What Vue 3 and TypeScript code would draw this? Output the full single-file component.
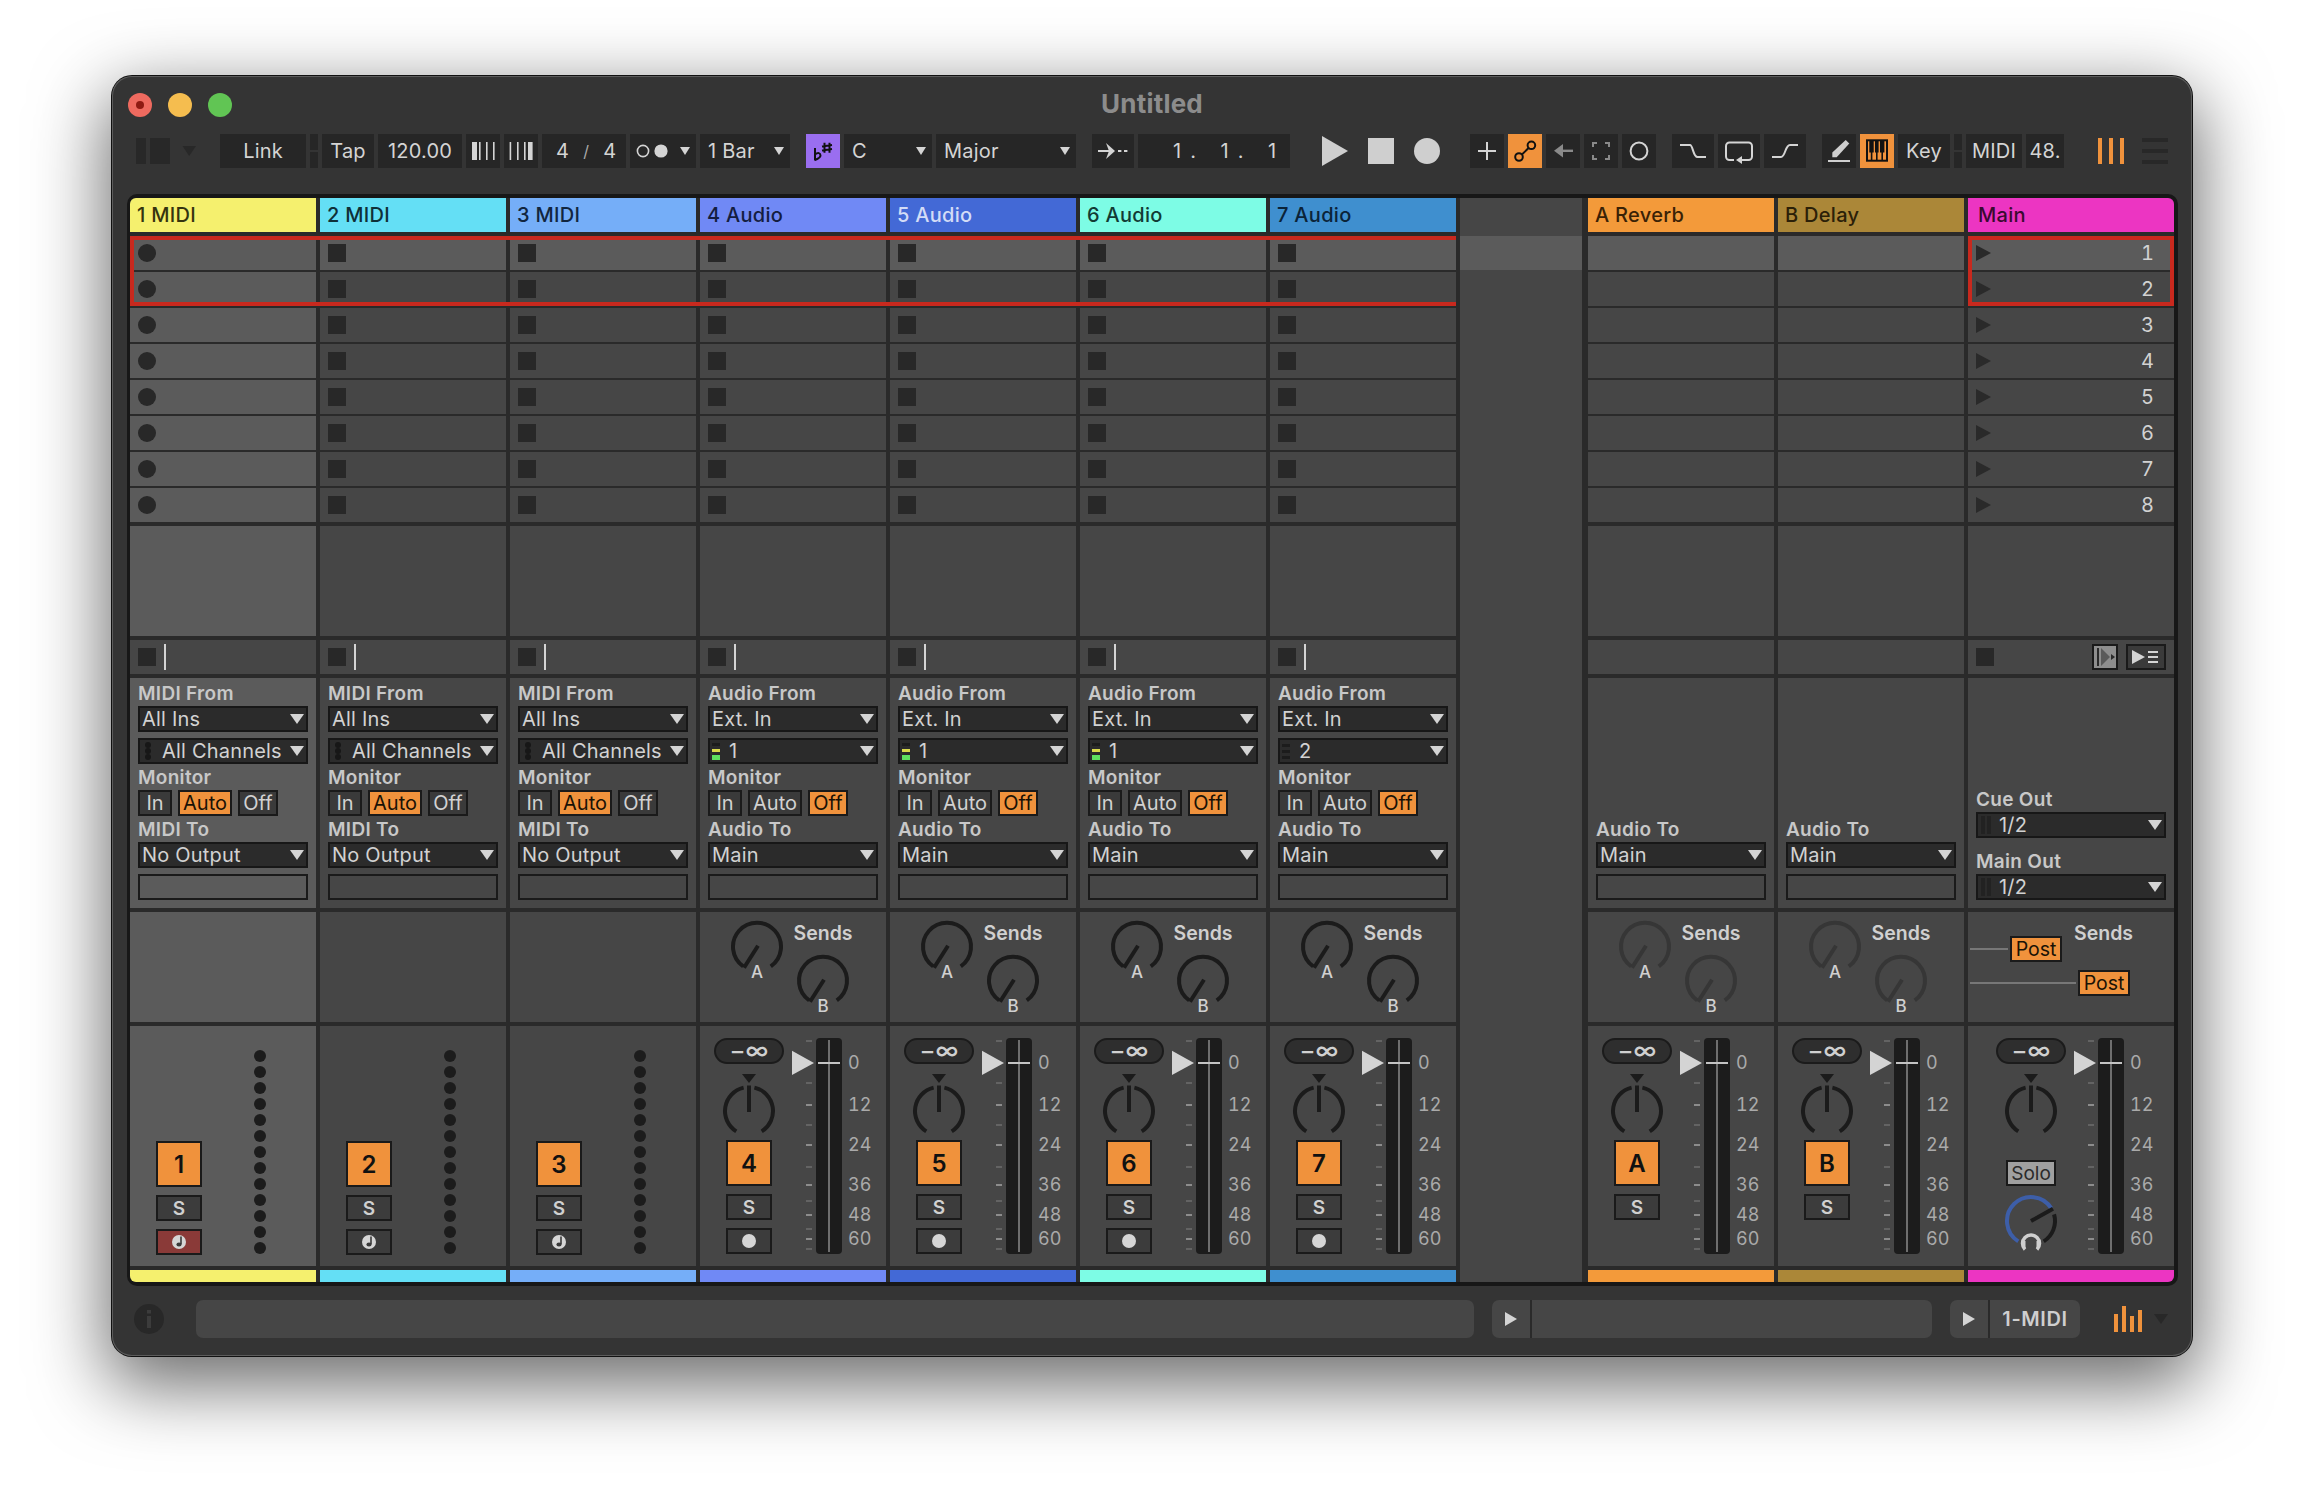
<script setup lang="ts">
type Kind = 'midi' | 'audio' | 'return' | 'main'
interface Track {
  id: string
  name: string
  kind: Kind
  color: string
  ink: string
  input?: string
  selected?: boolean
}

const tracks: Track[] = [
  { id: '1', name: '1 MIDI', kind: 'midi', color: '#f5f06e', ink: '#35340f', selected: true },
  { id: '2', name: '2 MIDI', kind: 'midi', color: '#64dff5', ink: '#0f3038' },
  { id: '3', name: '3 MIDI', kind: 'midi', color: '#75aef8', ink: '#12263f' },
  { id: '4', name: '4 Audio', kind: 'audio', color: '#7089f5', ink: '#141d40', input: '1' },
  { id: '5', name: '5 Audio', kind: 'audio', color: '#4369d6', ink: '#d3dcf6', input: '1' },
  { id: '6', name: '6 Audio', kind: 'audio', color: '#7dfce5', ink: '#123a34', input: '1' },
  { id: '7', name: '7 Audio', kind: 'audio', color: '#3f8fcf', ink: '#0b2338', input: '2' },
]
const returns: Track[] = [
  { id: 'A', name: 'A Reverb', kind: 'return', color: '#f39a3a', ink: '#3a2206' },
  { id: 'B', name: 'B Delay', kind: 'return', color: '#ab8738', ink: '#2b2008' },
]
const rows = [1, 2, 3, 4, 5, 6, 7, 8]
const dots = Array.from({ length: 13 }, (_, i) => i)

const ticks = [
  { y: 3, on: false }, { y: 45, on: false }, { y: 67, on: true }, { y: 87, on: false },
  { y: 107, on: true }, { y: 129, on: false }, { y: 147, on: true }, { y: 163, on: false },
  { y: 177, on: true }, { y: 191, on: false }, { y: 201, on: true }, { y: 211, on: false },
]
const scale = [
  { t: '0', y: 31 }, { t: '12', y: 73 }, { t: '24', y: 113 },
  { t: '36', y: 153 }, { t: '48', y: 183 }, { t: '60', y: 207 },
]

function arc(cx: number, cy: number, r: number, a0: number, a1: number): string {
  const p = (a: number) => {
    const t = (a * Math.PI) / 180
    return `${(cx + r * Math.sin(t)).toFixed(2)} ${(cy - r * Math.cos(t)).toFixed(2)}`
  }
  return `M${p(a0)}A${r} ${r} 0 ${Math.abs(a1 - a0) > 180 ? 1 : 0} 1 ${p(a1)}`
}
const knobs = [
  { cx: 57, cy: 34.7, label: 'A', ly: 65.5 },
  { cx: 123, cy: 68.7, label: 'B', ly: 99.5 },
]
const panLeft = arc(28, 28, 24, -148, -13)
const panRight = arc(28, 28, 24, 13, 148)
const cueBlue = arc(28, 28, 24, -148, 58)
const cueDark = arc(28, 28, 24, 74, 148)
</script>

<template>
  <div class="page">
    <div class="window">
      <header class="titlebar">
        <div class="lights">
          <span class="light red"><i></i></span>
          <span class="light yellow"></span>
          <span class="light green"></span>
        </div>
        <div class="title">Untitled</div>
        <div></div>
      </header>

      <div class="toolbar">
        <svg class="view" width="60" height="26" viewBox="0 0 60 26">
          <rect x="0" y="0" width="10" height="26" fill="#282828" />
          <rect x="14" y="0" width="20" height="26" fill="#282828" />
          <polygon points="46.5,8 60,8 53.2,18" fill="#282828" />
        </svg>
        <div class="tb w86">Link</div>
        <div class="dual"><i></i><i></i></div>
        <div class="tb w52">Tap</div>
        <div class="tb w84">120.00</div>
        <div class="tb w34">
          <svg width="34" height="34" viewBox="0 0 34 34" fill="#d4d4d4">
            <rect x="6" y="8" width="5" height="18" /><rect x="13" y="8" width="1.6" height="18" />
            <rect x="20" y="8" width="1.6" height="18" /><rect x="27" y="8" width="1.6" height="18" />
          </svg>
        </div>
        <div class="tb w34">
          <svg width="34" height="34" viewBox="0 0 34 34" fill="#d4d4d4">
            <rect x="5.6" y="8" width="1.6" height="18" /><rect x="13" y="8" width="1.6" height="18" />
            <rect x="20" y="8" width="1.6" height="18" /><rect x="24" y="8" width="4.6" height="18" />
          </svg>
        </div>
        <div class="tb w84 sig"><span>4</span><em>/</em><span>4</span></div>
        <div class="tb w66 quant">
          <svg width="40" height="16" viewBox="0 0 40 16">
            <circle cx="13" cy="8" r="5.6" fill="none" stroke="#d4d4d4" stroke-width="1.6" />
            <circle cx="31" cy="8" r="6.6" fill="#d4d4d4" />
          </svg>
          <span class="caret"></span>
        </div>
        <div class="tb w90 pick">1 Bar<span class="caret"></span></div>
        <div class="tb w34 purple ml12">
          <svg width="34" height="34" viewBox="0 0 34 34" fill="none" stroke="#111" stroke-width="2">
            <path d="M9 14v12.500" />
            <path d="M9 20.500c3-2.500 5.500-1.500 5.500 1 0 2-3 3.500-5.500 4.500" />
            <path d="M18.500 8.700v10M23.500 8.700v10M16 12.600l10-1.500M16 16.400l10-1.500" />
          </svg>
        </div>
        <div class="tb w88 pick">C<span class="caret"></span></div>
        <div class="tb w140 pick">Major<span class="caret"></span></div>
        <div class="tb w42 ml12">
          <svg width="42" height="34" viewBox="0 0 42 34" fill="#d4d4d4">
            <rect x="6" y="16" width="13" height="2" />
            <polygon points="14,9 23,17 14,25 17,17" />
            <rect x="26" y="16" width="3.4" height="2" /><rect x="32" y="16" width="3.4" height="2" />
          </svg>
        </div>
        <div class="tb w152 pos"><span>1.</span><span>1.</span><span>1</span></div>
        <div class="transport">
          <svg width="26" height="30" viewBox="0 0 26 30"><polygon points="0,0 26,15 0,30" fill="#cfcfcf" /></svg>
          <svg width="26" height="26" viewBox="0 0 26 26"><rect width="26" height="26" fill="#cfcfcf" /></svg>
          <svg width="26" height="26" viewBox="0 0 26 26"><circle cx="13" cy="13" r="13" fill="#cfcfcf" /></svg>
        </div>
        <div class="tb w34">
          <svg width="34" height="34" viewBox="0 0 34 34" fill="#d4d4d4">
            <rect x="8" y="16" width="18" height="2" /><rect x="16" y="8" width="2" height="18" />
          </svg>
        </div>
        <div class="tb w34 on">
          <svg width="34" height="34" viewBox="0 0 34 34" fill="none" stroke="#111" stroke-width="2">
            <circle cx="11" cy="23" r="3.8" /><circle cx="23.4" cy="11.3" r="3.8" />
            <line x1="14" y1="20.4" x2="20.6" y2="14" />
          </svg>
        </div>
        <div class="tb w34">
          <svg width="34" height="34" viewBox="0 0 34 34" fill="#8a8a8a">
            <rect x="14" y="15.6" width="13" height="2.4" /><polygon points="8,16.8 17,10 17,23.6" />
          </svg>
        </div>
        <div class="tb w34">
          <svg width="34" height="34" viewBox="0 0 34 34" fill="none" stroke="#8a8a8a" stroke-width="2">
            <path d="M9 13V9h4M21 9h4v4M25 21v4h-4M13 25H9v-4" />
          </svg>
        </div>
        <div class="tb w34">
          <svg width="34" height="34" viewBox="0 0 34 34" fill="none" stroke="#d4d4d4" stroke-width="2">
            <circle cx="17" cy="17" r="8.4" />
          </svg>
        </div>
        <div class="tb w42 ml12">
          <svg width="42" height="34" viewBox="0 0 42 34" fill="none" stroke="#d4d4d4" stroke-width="2">
            <path d="M8 11h10c3 0 3 12 7.5 12H34" />
          </svg>
        </div>
        <div class="tb w42">
          <svg width="42" height="34" viewBox="0 0 42 34" fill="none" stroke="#d4d4d4" stroke-width="2">
            <path d="M16 26h-4.500a3.500 3.500 0 0 1-3.500-3.500V12a3.500 3.500 0 0 1 3.500-3.500H30.500A3.500 3.500 0 0 1 34 12v10.500a3.500 3.500 0 0 1-3.500 3.500H23" />
            <polygon points="24,22 24,30 18,26" fill="#d4d4d4" stroke="none" />
          </svg>
        </div>
        <div class="tb w42">
          <svg width="42" height="34" viewBox="0 0 42 34" fill="none" stroke="#d4d4d4" stroke-width="2">
            <path d="M8 23h9c4.500 0 4-12 9-12H34" />
          </svg>
        </div>
        <div class="tb w34 ml12">
          <svg width="34" height="34" viewBox="0 0 34 34" fill="#cfcfcf">
            <polygon points="10.300,23.300 10.300,18.500 23.700,6 27.300,9.500 14.700,23.300" />
            <rect x="6" y="26" width="22" height="2" />
          </svg>
        </div>
        <div class="tb w34 on">
          <svg width="34" height="34" viewBox="0 0 34 34">
            <rect x="7" y="6.300" width="20" height="20.400" fill="none" stroke="#111" stroke-width="2" />
            <rect x="9.300" y="7" width="4.400" height="11.500" fill="#111" />
            <rect x="15" y="7" width="3.600" height="11.500" fill="#111" />
            <rect x="20" y="7" width="4.400" height="11.500" fill="#111" />
            <rect x="10.800" y="18" width="1.600" height="8" fill="#111" />
            <rect x="16" y="18" width="1.600" height="8" fill="#111" />
            <rect x="21.400" y="18" width="1.600" height="8" fill="#111" />
          </svg>
        </div>
        <div class="tb w52">Key</div>
        <div class="dual"><i></i><i></i></div>
        <div class="tb w56">MIDI</div>
        <div class="tb w38">48.</div>
        <svg class="views" width="26" height="26" viewBox="0 0 26 26" fill="#f0923c">
          <rect x="0" width="4" height="26" /><rect x="11" width="4" height="26" /><rect x="22" width="4" height="26" />
        </svg>
        <svg class="burger" width="26" height="26" viewBox="0 0 26 26" fill="#282828">
          <rect y="0" width="26" height="4" /><rect y="11" width="26" height="4" /><rect y="22" width="26" height="4" />
        </svg>
      </div>

      <div class="panel">
        <div class="session">
          <div class="sel sel-tracks"></div>
          <div class="sel sel-main"></div>

          <!-- audio & midi tracks -->
          <div v-for="t in tracks" :key="t.id" class="col" :class="{ chosen: t.selected }">
            <div class="hdr" :class="{ first: t.id === '1' }" :style="{ background: t.color, color: t.ink }">{{ t.name }}</div>
            <div class="clips">
              <div v-for="r in rows" :key="r" class="clip" :class="{ lit: r === 1 }">
                <span v-if="t.id === '1'" class="rec-dot"></span>
                <span v-else class="stop"></span>
              </div>
            </div>
            <div class="dev tone"></div>
            <div class="status">
              <span class="stop"></span><span class="cursor"></span>
            </div>
            <div class="io tone">
              <div class="lbl">{{ t.kind === 'midi' ? 'MIDI From' : 'Audio From' }}</div>
              <div class="dd"><span>{{ t.kind === 'midi' ? 'All Ins' : 'Ext. In' }}</span><b class="tri"></b></div>
              <div class="dd gap6">
                <span v-if="t.kind === 'midi'" class="mdots"><i></i><i></i><i></i></span>
                <span v-else class="mbars" :class="{ live: t.input === '1' }"><i></i><i></i><i></i></span>
                <span>{{ t.kind === 'midi' ? 'All Channels' : t.input }}</span><b class="tri"></b>
              </div>
              <div class="lbl">Monitor</div>
              <div class="mon">
                <span class="mb w-in">In</span>
                <span class="mb w-auto" :class="{ act: t.kind === 'midi' }">Auto</span>
                <span class="mb w-off" :class="{ act: t.kind === 'audio' }">Off</span>
              </div>
              <div class="lbl">{{ t.kind === 'midi' ? 'MIDI To' : 'Audio To' }}</div>
              <div class="dd"><span>{{ t.kind === 'midi' ? 'No Output' : 'Main' }}</span><b class="tri"></b></div>
              <div class="box gap6"></div>
            </div>
            <div class="sends tone">
              <svg v-if="t.kind === 'audio'" width="186" height="110" viewBox="0 0 186 110">
                <text class="s-title" x="123" y="27.500" text-anchor="middle">Sends</text>
                <g v-for="k in knobs" :key="k.label">
                  <path :d="arc(k.cx, k.cy, 24, -145, 145)" class="k-line" />
                  <line :x1="k.cx + 1" :y1="k.cy - 1" :x2="k.cx - 13" :y2="k.cy + 21" class="k-line" />
                  <text class="s-key" :x="k.cx" :y="k.ly" text-anchor="middle">{{ k.label }}</text>
                </g>
              </svg>
            </div>
            <div class="mix tone">
              <div class="stack">
                <template v-if="t.kind === 'audio'">
                  <div class="pill">−∞</div>
                  <span class="pan-tri"></span>
                  <svg class="pan" width="56" height="56" viewBox="0 0 56 56">
                    <path :d="panLeft" class="k-line" /><path :d="panRight" class="k-line" />
                    <line x1="28" y1="2.500" x2="28" y2="29" class="k-line" />
                  </svg>
                </template>
                <div v-else class="no-pan"></div>
                <div class="activator">{{ t.id }}</div>
                <div class="solo">S</div>
                <div class="arm" :class="{ armed: t.selected }">
                  <svg width="16" height="16" viewBox="0 0 16 16">
                    <circle cx="8" cy="8" r="7" fill="#d6d6d6" />
                    <template v-if="t.kind === 'midi'">
                      <path d="M10 2.500V10" stroke="#3a3a3a" stroke-width="1.600" />
                      <ellipse cx="8" cy="10.500" rx="2.600" ry="2" fill="#3a3a3a" />
                    </template>
                  </svg>
                </div>
              </div>
              <div v-if="t.kind === 'midi'" class="dots"><i v-for="d in dots" :key="d"></i></div>
              <svg v-else class="fader" width="92" height="216" viewBox="0 0 92 216">
                <rect v-for="m in ticks" :key="m.y" x="14" :y="m.y - 1" width="6" height="2" :fill="m.on ? '#8c8c8c' : '#636363'" />
                <polygon points="0,12.700 22,25 0,37" fill="#d4d4d4" />
                <rect x="24" width="26" height="216" rx="4" fill="#1c1c1c" />
                <rect x="36" y="2" width="2" height="212" fill="#6e6e6e" />
                <rect x="26" y="24" width="22" height="2" fill="#c4c4c4" />
                <text v-for="s in scale" :key="s.t" class="db" x="56" :y="s.y">{{ s.t }}</text>
              </svg>
            </div>
            <div class="strip" :class="{ first: t.id === '1' }" :style="{ background: t.color }"></div>
          </div>

          <!-- scene gap -->
          <div class="center">
            <div class="c-top"></div>
            <div class="c-lit"></div>
          </div>

          <!-- returns -->
          <div v-for="t in returns" :key="t.id" class="col">
            <div class="hdr" :style="{ background: t.color, color: t.ink }">{{ t.name }}</div>
            <div class="clips">
              <div v-for="r in rows" :key="r" class="clip" :class="{ lit: r === 1 }"></div>
            </div>
            <div class="dev"></div>
            <div class="status"></div>
            <div class="io">
              <div class="lbl">Audio To</div>
              <div class="dd"><span>Main</span><b class="tri"></b></div>
              <div class="box gap6"></div>
            </div>
            <div class="sends">
              <svg width="186" height="110" viewBox="0 0 186 110">
                <text class="s-title" x="123" y="27.500" text-anchor="middle">Sends</text>
                <g v-for="k in knobs" :key="k.label">
                  <path :d="arc(k.cx, k.cy, 24, -145, 145)" class="k-dim" />
                  <line :x1="k.cx + 1" :y1="k.cy - 1" :x2="k.cx - 13" :y2="k.cy + 21" class="k-dim" />
                  <text class="s-key" :x="k.cx" :y="k.ly" text-anchor="middle">{{ k.label }}</text>
                </g>
              </svg>
            </div>
            <div class="mix">
              <div class="stack">
                <div class="pill">−∞</div>
                <span class="pan-tri"></span>
                <svg class="pan" width="56" height="56" viewBox="0 0 56 56">
                  <path :d="panLeft" class="k-line" /><path :d="panRight" class="k-line" />
                  <line x1="28" y1="2.500" x2="28" y2="29" class="k-line" />
                </svg>
                <div class="activator">{{ t.id }}</div>
                <div class="solo">S</div>
              </div>
              <svg class="fader" width="92" height="216" viewBox="0 0 92 216">
                <rect v-for="m in ticks" :key="m.y" x="14" :y="m.y - 1" width="6" height="2" :fill="m.on ? '#8c8c8c' : '#636363'" />
                <polygon points="0,12.700 22,25 0,37" fill="#d4d4d4" />
                <rect x="24" width="26" height="216" rx="4" fill="#1c1c1c" />
                <rect x="36" y="2" width="2" height="212" fill="#6e6e6e" />
                <rect x="26" y="24" width="22" height="2" fill="#c4c4c4" />
                <text v-for="s in scale" :key="s.t" class="db" x="56" :y="s.y">{{ s.t }}</text>
              </svg>
            </div>
            <div class="strip" :style="{ background: t.color }"></div>
          </div>

          <!-- main -->
          <div class="col main">
            <div class="hdr main-hdr">Main</div>
            <div class="clips">
              <div v-for="r in rows" :key="r" class="clip scene" :class="{ lit: r === 1 }">
                <span class="launch"></span><span class="num">{{ r }}</span>
              </div>
            </div>
            <div class="dev"></div>
            <div class="status">
              <span class="stop"></span>
              <span class="st-btn st-a">
                <svg width="22" height="22" viewBox="0 0 22 22">
                  <rect x="3" y="2" width="2" height="18" fill="#2a2a2a" />
                  <polygon points="7,2 16,11 7,20" fill="#5a5a5a" />
                  <polygon points="17,8 21,11 17,14" fill="#2a2a2a" />
                </svg>
              </span>
              <span class="st-btn st-b">
                <svg width="36" height="22" viewBox="0 0 36 22" fill="#d4d4d4">
                  <polygon points="4,4 17,11 4,18" />
                  <rect x="20" y="5" width="10" height="2" /><rect x="20" y="10" width="10" height="2" /><rect x="20" y="15" width="10" height="2" />
                </svg>
              </span>
            </div>
            <div class="io">
              <div class="lbl">Cue Out</div>
              <div class="dd"><span class="mbars wide"><i></i><i></i></span><span>1/2</span><b class="tri"></b></div>
              <div class="lbl lbl-gap">Main Out</div>
              <div class="dd"><span class="mbars wide"><i></i><i></i></span><span>1/2</span><b class="tri"></b></div>
            </div>
            <div class="sends">
              <svg width="206" height="110" viewBox="0 0 206 110">
                <text class="s-title" x="135.500" y="27.500" text-anchor="middle">Sends</text>
                <line x1="2" y1="37" x2="40" y2="37" stroke="#777" stroke-width="2" />
                <rect x="43" y="25" width="50" height="24" fill="#f0923c" stroke="#1a1a1a" stroke-width="2" />
                <text class="post" x="68" y="43.500" text-anchor="middle">Post</text>
                <line x1="2" y1="71" x2="108" y2="71" stroke="#777" stroke-width="2" />
                <rect x="111" y="59" width="50" height="24" fill="#f0923c" stroke="#1a1a1a" stroke-width="2" />
                <text class="post" x="136" y="77.500" text-anchor="middle">Post</text>
              </svg>
            </div>
            <div class="mix">
              <div class="stack">
                <div class="pill">−∞</div>
                <span class="pan-tri"></span>
                <svg class="pan" width="56" height="56" viewBox="0 0 56 56">
                  <path :d="panLeft" class="k-line" /><path :d="panRight" class="k-line" />
                  <line x1="28" y1="2.500" x2="28" y2="29" class="k-line" />
                </svg>
                <div class="solo-main">Solo</div>
                <svg class="cue" width="56" height="58" viewBox="0 0 56 58">
                  <path :d="cueBlue" class="k-blue" /><path :d="cueDark" class="k-line" />
                  <line x1="28" y1="28" x2="50" y2="15.700" class="k-line" />
                  <path d="M22 56.500A8.500 8.500 0 1 1 34 56.500" fill="none" stroke="#cfcfcf" stroke-width="3.500" />
                  <rect x="19" y="48" width="3.500" height="7" fill="#cfcfcf" />
                  <rect x="33.500" y="48" width="3.500" height="7" fill="#cfcfcf" />
                </svg>
              </div>
              <svg class="fader" width="92" height="216" viewBox="0 0 92 216">
                <rect v-for="m in ticks" :key="m.y" x="14" :y="m.y - 1" width="6" height="2" :fill="m.on ? '#8c8c8c' : '#636363'" />
                <polygon points="0,12.700 22,25 0,37" fill="#d4d4d4" />
                <rect x="24" width="26" height="216" rx="4" fill="#1c1c1c" />
                <rect x="36" y="2" width="2" height="212" fill="#6e6e6e" />
                <rect x="26" y="24" width="22" height="2" fill="#c4c4c4" />
                <text v-for="s in scale" :key="s.t" class="db" x="56" :y="s.y">{{ s.t }}</text>
              </svg>
            </div>
            <div class="strip main-strip"></div>
          </div>
        </div>
      </div>

      <footer class="statusbar">
        <svg class="info" width="30" height="30" viewBox="0 0 30 30">
          <circle cx="15" cy="15" r="15" fill="#282828" />
          <rect x="13" y="6" width="4" height="3.500" fill="#3c3c3c" /><rect x="13" y="12" width="4" height="12" fill="#3c3c3c" />
        </svg>
        <div class="bar b1"></div>
        <div class="bar b2">
          <span class="bar-play"><i></i></span>
        </div>
        <div class="bar b3">
          <span class="bar-play"><i></i></span><span class="bar-name">1-MIDI</span>
        </div>
        <svg class="meter" width="28" height="26" viewBox="0 0 28 26" fill="#f0923c">
          <rect x="0" y="8" width="4" height="18" /><rect x="8" y="0" width="4" height="26" />
          <rect x="16" y="10" width="4" height="16" /><rect x="24" y="4" width="4" height="22" />
        </svg>
        <svg class="meter-tri" width="14" height="10" viewBox="0 0 14 10"><polygon points="0,0 14,0 7,10" fill="#282828" /></svg>
      </footer>
    </div>
  </div>
</template>

<style scoped>
.page {
  width: 2304px;
  height: 1504px;
  box-sizing: border-box;
  padding: 76px 0 0 112px;
  overflow: hidden;
  background: #fff;
  font-family: Inter, "Noto Sans", "Liberation Sans", sans-serif;
  font-size: 19px;
  color: #d2d2d2;
}
.window {
  width: 2080px;
  height: 1280px;
  background: #343434;
  border-radius: 20px;
  box-shadow: inset 0 0 0 1px #5c5c5c, 0 0 0 1px #111, 0 24px 72px 6px rgba(0, 0, 0, 0.58);
  display: flex;
  flex-direction: column;
}
.titlebar {
  height: 58px;
  display: grid;
  grid-template-columns: 1fr auto 1fr;
  align-items: center;
}
.lights { display: flex; gap: 16px; padding: 0 0 0 16px; margin-top: -1px; }
.light { width: 24px; height: 24px; border-radius: 50%; display: flex; align-items: center; justify-content: center; }
.light i { width: 8px; height: 8px; border-radius: 50%; background: #8e1a12; }
.red { background: #ee6a5f; }
.yellow { background: #f5bd4f; }
.green { background: #61c554; }
.title { font-size: 26px; letter-spacing: 0.2px; font-weight: 700; color: #8c8c8c; margin-top: -3px; }

.toolbar { height: 34px; display: flex; align-items: center; gap: 4px; padding-left: 24px; font-size: 20px; letter-spacing: 0.2px; }
.view { margin-right: 20px; }
.tb { height: 34px; background: #262626; display: flex; align-items: center; justify-content: center; flex: none; color: #d4d4d4; }
.w34 { width: 34px; } .w38 { width: 38px; } .w42 { width: 42px; } .w52 { width: 52px; } .w56 { width: 56px; }
.w66 { width: 66px; } .w84 { width: 84px; } .w86 { width: 86px; } .w88 { width: 88px; } .w90 { width: 90px; }
.w140 { width: 140px; } .w152 { width: 152px; }
.ml12 { margin-left: 12px; }
.dual { width: 8px; height: 34px; display: flex; flex-direction: column; gap: 2px; flex: none; }
.dual i { flex: 1; background: #262626; }
.sig { justify-content: flex-start; padding-left: 14px; gap: 0; box-sizing: border-box; }
.sig em { font-style: normal; color: #aaa; font-size: 16px; width: 26px; margin: 0 4px; text-align: center; }
.quant { box-sizing: border-box; justify-content: flex-start; padding-left: 0; gap: 10px; }
.caret { width: 0; height: 0; border-left: 5px solid transparent; border-right: 5px solid transparent; border-top: 8px solid #d4d4d4; }
.pick { justify-content: space-between; box-sizing: border-box; padding: 0 6px 0 8px; }
.purple { background: #9a6ef0; }
.pos { justify-content: flex-end; box-sizing: border-box; padding-right: 10px; }
.pos span { width: 47.5px; letter-spacing: 9px; flex: none; }
.pos span:last-child { width: 12px; letter-spacing: 0; }
.transport { display: flex; align-items: center; gap: 20px; margin: 0 26px 0 28px; }
.on { background: #f0923c; }
.views { margin-left: 30px; flex: none; }
.burger { margin-left: 14px; flex: none; }

.panel {
  margin: 26px 0 0 15px;
  width: 2051px;
  height: 1092px;
  box-sizing: border-box;
  padding: 4px 4px 4px 3px;
  background: #171717;
  border-radius: 10px;
}
.session {
  position: relative;
  height: 1084px;
  display: flex;
  gap: 4px;
  background: #2a2a2a;
  border-radius: 6px;
}
.sel { position: absolute; top: 38px; height: 70px; box-sizing: border-box; border: 4px solid #c8291e; pointer-events: none; z-index: 2; }
.sel-tracks { left: 0; width: 1326px; border-right: 0; }
.sel-main { left: 1838px; width: 206px; }

.col { width: 186px; flex: none; display: flex; flex-direction: column; gap: 4px; }
.col.main { width: 206px; }
.hdr { height: 34px; display: flex; align-items: center; padding-left: 7px; font-weight: 500; font-size: 20px; letter-spacing: 0.3px; }
.hdr.first { border-top-left-radius: 6px; }
.main-hdr { background: #ec35c2; color: #3a0a30; padding-left: 10px; border-top-right-radius: 6px; }
.clips { height: 286px; display: flex; flex-direction: column; gap: 2px; }
.clip { height: 34px; background: #464646; display: flex; align-items: center; padding-left: 8px; }
.clip.lit, .chosen .clip { background: #5b5b5b; }
.stop { width: 18px; height: 18px; background: #282828; flex: none; }
.rec-dot { width: 18px; height: 18px; border-radius: 50%; background: #282828; }
.scene { justify-content: space-between; padding-right: 20px; }
.launch { width: 0; height: 0; border-top: 8.5px solid transparent; border-bottom: 8.5px solid transparent; border-left: 15px solid #2a2a2a; }
.num { font-size: 20px; color: #d2d2d2; font-feature-settings: "tnum"; }
.dev { height: 110px; background: #464646; }
.status { height: 34px; background: #464646; display: flex; align-items: center; padding-left: 8px; }
.cursor { width: 2px; height: 26px; background: #d4d4d4; margin-left: 8px; }
.main .status { padding-right: 8px; }
.st-btn { height: 26px; box-sizing: border-box; border: 2px solid #1a1a1a; display: flex; align-items: center; justify-content: center; }
.st-a { width: 26px; background: #8e8e8e; margin-left: auto; }
.st-b { width: 40px; background: #3a3a3a; margin-left: 8px; }
.tone { background: #464646; }
.chosen .tone { background: #5b5b5b; }

.io {
  height: 230px;
  box-sizing: border-box;
  padding: 0 8px 8px;
  background: #464646;
  display: flex;
  flex-direction: column;
  justify-content: flex-end;
}
.lbl { height: 26px; line-height: 28px; font-weight: 600; font-size: 19px; letter-spacing: 0.3px; color: #c8c8c8; white-space: nowrap; }
.lbl-gap { margin-top: 10px; }
.dd {
  height: 26px;
  box-sizing: border-box;
  border: 2px solid #171717;
  background: #2b2b2b;
  display: flex;
  align-items: center;
  padding: 0 2px 0 2px;
  color: #d2d2d2;
  font-size: 20px;
  letter-spacing: 0.2px;
  white-space: nowrap;
}
.tri { margin-left: auto; width: 0; height: 0; border-left: 7px solid transparent; border-right: 7px solid transparent; border-top: 10px solid #d4d4d4; flex: none; }
.gap6 { margin-top: 6px; }
.mdots { display: flex; flex-direction: column; gap: 0; width: 6px; margin: 0 11px 0 3px; flex: none; }
.mdots i { width: 6px; height: 6px; border-radius: 50%; background: #171717; }
.mbars { display: flex; flex-direction: column; gap: 3px; width: 8px; margin: 0 9px 0 0; flex: none; }
.mbars i { height: 3px; background: #1c1c1c; }
.mbars.live i:nth-child(2) { background: #d8d84a; }
.mbars.live i:nth-child(3) { height: 5px; background: #5fe05f; }
.mbars.wide { flex-direction: row; width: 10px; height: 18px; gap: 2px; margin-right: 8px; margin-left: 1px; }
.mbars.wide i { flex: 1; height: 18px; background: #222; }
.mon { height: 26px; display: flex; gap: 6px; }
.mb { height: 26px; box-sizing: border-box; border: 2px solid #1a1a1a; background: #3a3a3a; display: flex; align-items: center; justify-content: center; font-size: 20px; color: #d2d2d2; }
.w-in { width: 34px; } .w-auto { width: 54px; } .w-off { width: 40px; }
.mb.act { background: #f0923c; color: #1a1206; }
.box { height: 26px; box-sizing: border-box; border: 2px solid #1a1a1a; }

.sends { height: 110px; background: #464646; }
.sends svg { display: block; }
.s-title { font-size: 19.500px; font-weight: 600; fill: #d0d0d0; }
.s-key { font-size: 17px; font-weight: 500; fill: #d0d0d0; }
.post { font-size: 19.500px; fill: #1a1206; }
.k-line { fill: none; stroke: #1b1b1b; stroke-width: 4; stroke-linecap: butt; }
.k-dim { fill: none; stroke: #363636; stroke-width: 4; }
.k-blue { fill: none; stroke: #3d5ea8; stroke-width: 4; }

.mix { height: 240px; box-sizing: border-box; padding: 12px 0 0 6px; background: #464646; display: flex; align-items: flex-start; }
.main .mix { padding-left: 20px; }
.stack { width: 86px; flex: none; display: flex; flex-direction: column; align-items: center; }
.pill {
  width: 70px;
  height: 26px;
  box-sizing: border-box;
  border: 2px solid #1b1b1b;
  border-radius: 13px;
  background: #2e2e2e;
  display: flex;
  align-items: center;
  justify-content: center;
  font-size: 24px;
  font-weight: 500;
  line-height: 1;
  color: #d0d0d0;
}
.pan-tri { width: 0; height: 0; margin-top: 10px; border-left: 7px solid transparent; border-right: 7px solid transparent; border-top: 9px solid #1b1b1b; }
.pan { display: block; flex: none; }
.no-pan { height: 102px; flex: none; }
.activator {
  width: 46px;
  height: 46px;
  margin-top: 1px;
  box-sizing: border-box;
  border: 2px solid #1a1a1a;
  background: #f0923c;
  color: #111;
  font-weight: 600;
  font-size: 24px;
  display: flex;
  align-items: center;
  justify-content: center;
}
.solo, .arm {
  width: 46px;
  height: 26px;
  margin-top: 8px;
  box-sizing: border-box;
  border: 2px solid #1a1a1a;
  background: #3c3c3c;
  display: flex;
  align-items: center;
  justify-content: center;
  font-size: 19px;
  font-weight: 600;
  color: #d0d0d0;
}
.armed { background: #8a3a38; }
.solo-main {
  width: 50px;
  height: 26px;
  margin-top: 21px;
  box-sizing: border-box;
  border: 2px solid #1a1a1a;
  background: #a0a0a0;
  color: #2a2a2a;
  font-size: 19px;
  display: flex;
  align-items: center;
  justify-content: center;
}
.cue { display: block; margin-top: 7px; flex: none; }
.fader { display: block; flex: none; }
.db { font-size: 18px; fill: #aaaaaa; font-feature-settings: "tnum"; }
.dots { margin: 12px 0 0 32px; display: flex; flex-direction: column; gap: 4px; }
.dots i { width: 12px; height: 12px; border-radius: 50%; background: #1c1c1c; }
.strip { height: 12px; }
.strip.first { border-bottom-left-radius: 6px; }
.main-strip { background: #ec35c2; border-bottom-right-radius: 6px; }

.center { width: 122px; flex: none; margin-right: 2px; background: #464646; display: flex; flex-direction: column; }
.c-top { height: 38px; }
.c-lit { height: 34px; background: #5b5b5b; }

.statusbar { margin-top: 14px; height: 38px; display: flex; align-items: center; padding-left: 22px; }
.info { flex: none; margin-right: 32px; }
.bar { height: 38px; background: #464646; border-radius: 7px; display: flex; flex: none; }
.b1 { width: 1278px; }
.b2 { width: 440px; margin-left: 18px; }
.b3 { width: 130px; margin-left: 18px; }
.bar-play { width: 38px; border-right: 2px solid #2a2a2a; display: flex; align-items: center; justify-content: center; flex: none; }
.bar-play i { width: 0; height: 0; border-top: 7px solid transparent; border-bottom: 7px solid transparent; border-left: 12px solid #d4d4d4; }
.bar-name { flex: 1; display: flex; align-items: center; justify-content: center; font-weight: 600; font-size: 20px; letter-spacing: 0.6px; color: #cfcfcf; }
.meter { flex: none; margin-left: 34px; }
.meter-tri { flex: none; margin-left: 12px; }
</style>

<style>
html, body { margin: 0; background: #fff; }
</style>
